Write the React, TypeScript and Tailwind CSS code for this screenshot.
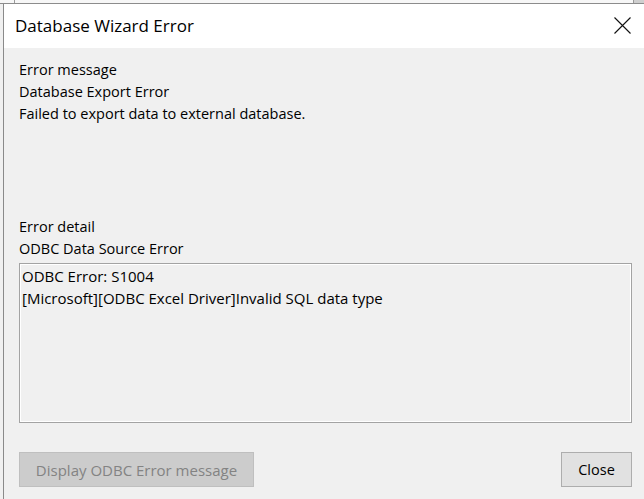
import React from "react";

export default function App() {
  const font = { fontFamily: '"Open Sans", "Noto Sans", sans-serif' };
  return (
    <div className="w-[644px] h-[499px] overflow-hidden bg-[#f0f0f0] flex flex-col text-black" style={font}>
      {/* background strip behind window */}
      <div className="h-[3px] flex bg-[#f7f7f7] shrink-0">
        <div className="w-[14px]" />
        <div className="w-px bg-[#9a9a9a]" />
        <div className="flex-1" />
        <div className="w-[11px] bg-[#cfcfcf] border-l border-[#9a9a9a]" />
      </div>
      <div className="h-px bg-[#8c8c8c] shrink-0" />
      <div className="flex flex-1 min-h-0">
        <div className="w-[3px] bg-[#f0f0f0]" />
        <div className="flex-1 flex flex-col border-l border-[#8a8a8a]">
          {/* title bar */}
          <div className="h-[44px] bg-white flex items-center pl-[11px] pr-[13px] shrink-0">
            <span className="text-[17px] flex-1">Database Wizard Error</span>
            <svg width="17" height="17" viewBox="0 0 17 17" className="mt-[-2px]">
              <path d="M0.5 0.5 L16.5 16.5 M16.5 0.5 L0.5 16.5" stroke="#111" strokeWidth="1.1" fill="none" />
            </svg>
          </div>
          {/* body */}
          <div className="flex-1 flex flex-col pl-[15px] pr-[12px] pt-[11px] text-[14.5px] leading-[22px]">
            <div>Error message</div>
            <div>Database Export Error</div>
            <div>Failed to export data to external database.</div>
            <div className="mt-[91px]">Error detail</div>
            <div>ODBC Data Source Error</div>
            <div className="mt-[3px] h-[160px] border border-[#a3a3a3] shadow-[inset_0_0_0_1px_#ffffff] pl-[2px] pt-[1px] text-[15px]">
              <div>ODBC Error: S1004</div>
              <div>[Microsoft][ODBC Excel Driver]Invalid SQL data type</div>
            </div>
            <div className="mt-[29px] flex justify-between">
              <div className="w-[235px] h-[35px] bg-[#cccccc] border border-[#bfbfbf] text-[#838383] flex items-center justify-center text-[15px]">
                Display ODBC Error message
              </div>
              <div className="w-[71px] h-[35px] bg-[#e1e1e1] border border-[#adadad] flex items-center justify-center">
                Close
              </div>
            </div>
          </div>
        </div>
      </div>
    </div>
  );
}
